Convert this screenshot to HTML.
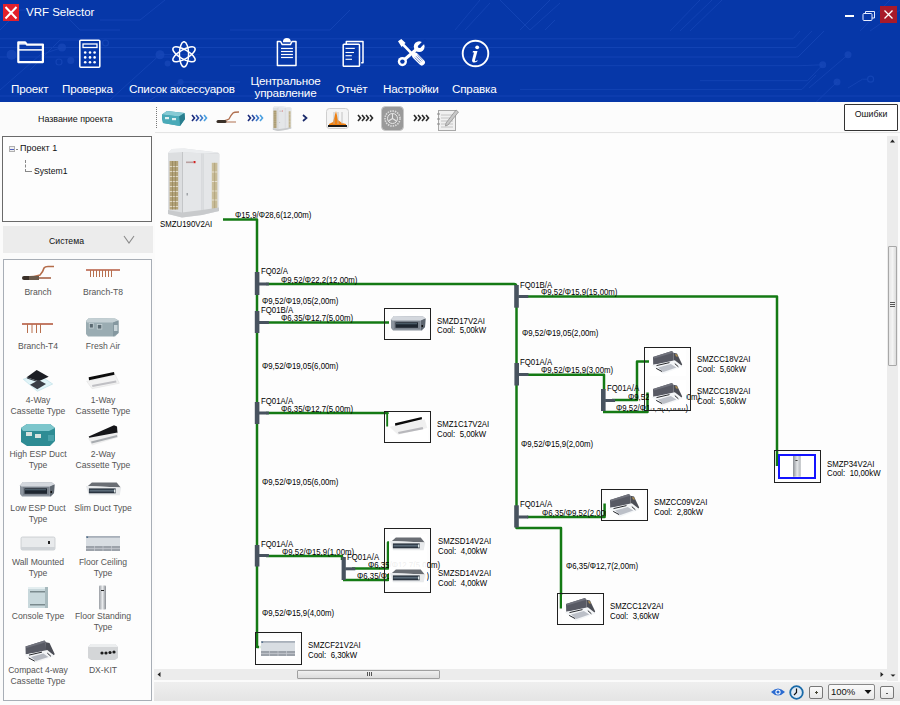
<!DOCTYPE html>
<html><head><meta charset="utf-8">
<style>
*{margin:0;padding:0;box-sizing:border-box}
html,body{width:900px;height:705px;overflow:hidden;background:#fbfbfb;font-family:"Liberation Sans",sans-serif;position:relative}
.a{position:absolute}
#hdr{left:0;top:0;width:900px;height:102px;background:#0637a8;overflow:hidden}
.ml{color:#fff;font-size:11.7px;letter-spacing:-0.2px;text-align:center;line-height:12px;white-space:nowrap}
.t8{font-size:8.8px;color:#000;white-space:nowrap;line-height:9px;transform:scaleX(0.89);transform-origin:0 0;margin-top:0.9px}
.lp{font-size:8.6px;color:#555;text-align:center;line-height:11px;white-space:nowrap}
.g{background:#167a12}
.j{background:#48535e}
.bx{border:1px solid #222;background:#fff}
</style></head><body>
<div id="hdr" class="a">
<svg class="a" style="left:0;top:0" width="900" height="102">
 <g stroke="#1747b8" stroke-width="1" fill="none" opacity="0.75">
  <path d="M0 38.8 H793 L800 31"/>
  <path d="M0 47.5 H796 L812 31"/>
  <path d="M0 57 H798 L824 31"/>
  <path d="M230 65.7 H800 L822 64.8"/>
  <path d="M700 80.7 H807.6 L822.7 64.8"/>
  <path d="M520 89.4 H802 L816 75"/>
  <path d="M809 88 L848 54.7"/>
  <path d="M816.3 102 L837 82"/>
  <path d="M848 88 L862.5 79.2 H867"/>
  <path d="M0 96 H900"/>
  <path d="M670 31 L700 0 M680 31 L712 0 M690 31 L722 0"/>
  <path d="M860 31 L890 0 M870 31 L900 10"/>
  <path d="M455 30 L480 0 M465 30 L490 3 M520 30 L550 0 M530 30 L560 3 M530 30 L500 0 M545 30 L555 20"/>
  <path d="M0 30 L20 10 H60 L80 30 H120"/>
  <path d="M30 70 L60 40 H100"/>
  <path d="M0 90 L40 55 L62 47.5"/>
  <path d="M110 100 L160 54.7 L200 54.7"/>
  <path d="M150 100 L180 82 H240"/>
  <path d="M100 20 L140 20 L165 0"/>
  <path d="M230 30 H330 L350 10"/>
 </g>
 <g fill="#1747b8" opacity="0.8">
  <circle cx="822.7" cy="64.8" r="3.5"/><circle cx="848" cy="54.7" r="3.5"/><circle cx="837" cy="82" r="3.5"/>
  <circle cx="11.6" cy="54.7" r="5"/><circle cx="62" cy="47.5" r="4"/><circle cx="70.8" cy="60.5" r="3.5"/>
  <circle cx="160" cy="54.7" r="4.5"/><circle cx="167.6" cy="63.4" r="3"/><circle cx="180.6" cy="82" r="3"/>
 </g>
 <g stroke="#1747b8" stroke-width="1.2" fill="none" opacity="0.8"><circle cx="870.6" cy="79.2" r="3"/><circle cx="59" cy="62" r="3"/><circle cx="105.5" cy="43" r="3"/></g>
</svg>
<div class="a" style="left:3px;top:4px;width:16px;height:17px;background:#e2202c"></div>
<svg class="a" style="left:3px;top:4px" width="16" height="17"><path d="M2.5 3 L13.5 14.5 M13.5 3 L2.5 14.5" stroke="#fff" stroke-width="2"/></svg>
<div class="a" style="left:26px;top:5px;font-size:11.5px;color:#fff;line-height:14px">VRF Selector</div>
<div class="a" style="left:845px;top:15px;width:9px;height:1.5px;background:#fff"></div>
<svg class="a" style="left:862px;top:10px" width="14" height="12"><rect x="1" y="3.5" width="9" height="7" rx="1" stroke="#e6ecff" stroke-width="1" fill="none"/><path d="M3.5 3.5 V1.5 H12.5 V8 H10" stroke="#e6ecff" stroke-width="1" fill="none"/></svg>
<div class="a" style="left:880px;top:6px;width:17px;height:17px;background:#a81a2a"></div>
<svg class="a" style="left:880px;top:6px" width="17" height="17"><path d="M4.5 4.5 L12.5 12.5 M12.5 4.5 L4.5 12.5" stroke="#fff" stroke-width="1.3"/></svg>

<!-- folder -->
<svg class="a" style="left:16px;top:40px" width="30" height="25"><path d="M2.3 2.3 H9.2 L10.8 4.6 H26.9 V22.1 H2.3 Z" stroke="#fff" stroke-width="2.2" fill="none" stroke-linejoin="round"/><path d="M2.3 3.2 H9.4 V4.6 H2.3 Z" fill="#fff"/><path d="M2.3 9.9 H26.9" stroke="#fff" stroke-width="1.5"/></svg>
<div class="a ml" style="left:11px;top:83px">Проект</div>
<!-- calculator -->
<svg class="a" style="left:78px;top:39px" width="24" height="30"><rect x="1.8" y="1.3" width="20" height="27" rx="1" stroke="#fff" stroke-width="1.6" fill="none"/><rect x="5" y="5" width="14" height="3.5" stroke="#fff" stroke-width="1.3" fill="none"/>
<g fill="#fff"><circle cx="7.2" cy="13.5" r="1.3"/><circle cx="12" cy="13.5" r="1.3"/><circle cx="16.6" cy="13.5" r="1.3"/><circle cx="7.2" cy="18.4" r="1.3"/><circle cx="12" cy="18.4" r="1.3"/><circle cx="16.6" cy="18.4" r="1.3"/><circle cx="7.2" cy="23.3" r="1.3"/><circle cx="12" cy="23.3" r="1.3"/><circle cx="16.6" cy="23.3" r="1.3"/></g></svg>
<div class="a ml" style="left:62px;top:83px">Проверка</div>
<!-- atom -->
<svg class="a" style="left:171px;top:41px" width="26" height="27"><g stroke="#fff" stroke-width="1.5" fill="none"><ellipse cx="13" cy="13.3" rx="12.6" ry="4.6" transform="rotate(90 13 13.3)"/><ellipse cx="13" cy="13.3" rx="12.6" ry="4.6" transform="rotate(30 13 13.3)"/><ellipse cx="13" cy="13.3" rx="12.6" ry="4.6" transform="rotate(150 13 13.3)"/></g></svg>
<div class="a ml" style="left:129px;top:83px">Список аксессуаров</div>
<!-- clipboard -->
<svg class="a" style="left:270px;top:34px" width="34" height="36"><path d="M7.4 7.5 H10.6 L12.2 10.6 H20.4 L22 7.5 H26 V31.6 H7.4 Z" stroke="#fff" stroke-width="1.5" fill="none" stroke-linejoin="round"/><path d="M12.9 8.3 Q13 4.1 16.9 4.1 Q20.8 4.1 20.9 8.3 Z" fill="#fff"/><g stroke="#fff" stroke-width="1.2"><path d="M11 14.5 H22.9"/><path d="M11 17.5 H22.9"/><path d="M11 20.5 H22.9"/><path d="M11 23.5 H22.9"/></g></svg>
<div class="a ml" style="left:250px;top:75px;width:71px">Центральное<br>управление</div>
<!-- report -->
<svg class="a" style="left:335px;top:34px" width="34" height="36"><path d="M11.3 10 V7.4 H28 V28.8 H26.2" stroke="#fff" stroke-width="1.5" fill="none" stroke-linejoin="round"/><rect x="8.2" y="10.3" width="16.3" height="22" rx="0.8" stroke="#fff" stroke-width="1.5" fill="none"/><g stroke="#fff" stroke-width="1.1"><path d="M10.5 14.4 H19.8"/><path d="M10.5 18.5 H19"/><path d="M10.5 21.7 H16.8"/><path d="M10.5 25.3 H17"/></g></svg>
<div class="a ml" style="left:336px;top:83px">Отчёт</div>
<!-- tools -->
<svg class="a" style="left:392px;top:34px" width="40" height="38">
<g fill="#fff">
<path d="M6 7.2 L9.3 5 L13.6 9 L12.4 10.1 L21.5 19.4 L19.6 21.2 L10.6 12 L9.6 12.9 Z"/>
<circle cx="10.4" cy="27.6" r="4.6"/>
<circle cx="27.2" cy="12.6" r="5.4"/>
</g>
<path d="M12 26 L26 14" stroke="#fff" stroke-width="3"/>
<path d="M23.2 21.8 L29.8 28.4" stroke="#fff" stroke-width="6.2" stroke-linecap="round"/>
<path d="M19.8 20.8 L22.6 18" stroke="#fff" stroke-width="3"/>
<circle cx="10.4" cy="27.6" r="2.2" fill="#0637a8"/>
<path d="M26.4 11.4 L28.6 13.6 L35 7.2 L32.8 5 Z" fill="#0637a8"/>
<circle cx="27.5" cy="12.5" r="1.6" fill="#0637a8"/>
<g stroke="#0637a8" stroke-width="0.6"><path d="M22.8 23.6 L28 28.8"/><path d="M24.1 22.3 L29.3 27.5"/><path d="M25.4 21 L30.6 26.2"/></g>
</svg>
<div class="a ml" style="left:383px;top:83px">Настройки</div>
<!-- info -->
<svg class="a" style="left:461px;top:39px" width="29" height="29"><circle cx="14.5" cy="14.5" r="12.8" stroke="#fff" stroke-width="1.9" fill="none"/><circle cx="16.2" cy="8.3" r="1.9" fill="#fff"/><path d="M12 12 H16.5 L14 21 Q13.5 22.5 15 22 L16.6 21 L16.2 22.5 Q13.5 24 11.8 23.2 Q10.6 22.3 11.2 20.6 L13 13.5 L11.6 13.4 Z" fill="#fff"/></svg>
<div class="a ml" style="left:452px;top:83px">Справка</div>
</div>

<!-- left panel -->
<div class="a" style="left:0;top:102px;width:155px;height:603px;background:#fbfbfb"></div>
<div class="a" style="left:38px;top:114px;font-size:8.9px;color:#111;line-height:11px">Название проекта</div>
<div class="a" style="left:2px;top:136px;width:150px;height:86px;border:1px solid #6a6a6a;background:#fdfdfd"></div>
<div class="a" style="left:9px;top:146px;width:6px;height:6px;border:1px solid #b0b0b0;background:#eee"></div>
<div class="a" style="left:10px;top:148.5px;width:4px;height:1px;background:#5060c0"></div>
<div class="a" style="left:16px;top:149px;width:2px;height:1px;background:#888"></div>
<div class="a" style="left:20px;top:143px;font-size:9px;color:#111;line-height:11px">Проект 1</div>
<div class="a" style="left:25px;top:160px;width:1px;height:12px;border-left:1px dashed #888"></div>
<div class="a" style="left:26px;top:171px;width:6px;height:1px;border-top:1px dashed #888"></div>
<div class="a" style="left:34px;top:166px;font-size:8.6px;color:#111;line-height:11px">System1</div>
<div class="a" style="left:3px;top:226px;width:150px;height:27px;background:#ececec"></div>
<div class="a" style="left:49px;top:236px;font-size:8.7px;color:#111;line-height:11px">Система</div>
<svg class="a" style="left:123px;top:235px" width="12" height="9"><path d="M1 1 L6 8 L11 1" stroke="#8a8a8a" stroke-width="1.1" fill="none"/></svg>
<div class="a" style="left:3px;top:259px;width:149px;height:442px;border:1px solid #a8aeb6;background:#fdfdfd"></div>

<!-- items -->
<div class="a lp" style="left:3px;top:287px;width:70px">Branch</div>
<div class="a lp" style="left:68px;top:287px;width:70px">Branch-T8</div>
<div class="a lp" style="left:3px;top:341px;width:70px">Branch-T4</div>
<div class="a lp" style="left:68px;top:341px;width:70px">Fresh Air</div>
<div class="a lp" style="left:3px;top:395px;width:70px">4-Way<br>Cassette Type</div>
<div class="a lp" style="left:68px;top:395px;width:70px">1-Way<br>Cassette Type</div>
<div class="a lp" style="left:3px;top:449px;width:70px">High ESP Duct<br>Type</div>
<div class="a lp" style="left:68px;top:449px;width:70px">2-Way<br>Cassette Type</div>
<div class="a lp" style="left:3px;top:503px;width:70px">Low ESP Duct<br>Type</div>
<div class="a lp" style="left:68px;top:503px;width:70px">Slim Duct Type</div>
<div class="a lp" style="left:3px;top:557px;width:70px">Wall Mounted<br>Type</div>
<div class="a lp" style="left:68px;top:557px;width:70px">Floor Ceiling<br>Type</div>
<div class="a lp" style="left:3px;top:611px;width:70px">Console Type</div>
<div class="a lp" style="left:68px;top:611px;width:70px">Floor Standing<br>Type</div>
<div class="a lp" style="left:3px;top:665px;width:70px">Compact 4-way<br>Cassette Type</div>
<div class="a lp" style="left:68px;top:665px;width:70px">DX-KIT</div>

<!-- symbol defs -->
<svg width="0" height="0" style="position:absolute">
<defs>
 <linearGradient id="gDuct" x1="0" y1="0" x2="0" y2="1"><stop offset="0" stop-color="#c8ccd2"/><stop offset="1" stop-color="#7e858e"/></linearGradient>
 <linearGradient id="gSteel" x1="0" y1="0" x2="1" y2="0"><stop offset="0" stop-color="#9a9ea4"/><stop offset="0.5" stop-color="#e8eaec"/><stop offset="1" stop-color="#8a8e94"/></linearGradient>
</defs></svg>
<!-- item icons -->
<svg class="a" style="left:21px;top:265px" width="34" height="17"><path d="M6 13 H30" stroke="#a05a3c" stroke-width="1.5"/><path d="M4 12 Q14 12 19 10 Q22 7 23 3 Q24 1.5 27 1.5 L33 1.5" stroke="#b46c4a" stroke-width="1.6" fill="none"/><rect x="1" y="11" width="17" height="4" rx="2" fill="#3a3028"/><rect x="8" y="11" width="10" height="4" fill="#6a5a4c"/></svg>
<svg class="a" style="left:86px;top:269px" width="35" height="10"><path d="M0 1 H34" stroke="#b45a40" stroke-width="1.6"/><g stroke="#b8704e" stroke-width="1"><path d="M4.5 1 V8 M7.5 1 V8 M10.5 1 V8 M13.5 1 V8 M16.5 1 V8 M19.5 1 V8 M22.5 1 V8 M25.5 1 V8"/></g></svg>
<svg class="a" style="left:22px;top:323px" width="32" height="11"><path d="M0 1 H31" stroke="#b45a40" stroke-width="1.6"/><g stroke="#b8704e" stroke-width="1"><path d="M5.5 1 V10 M10 1 V10 M14.5 1 V10 M18.5 1 V10"/></g></svg>
<svg class="a" style="left:85px;top:317px" width="35" height="21"><path d="M1 4 L4 1 L30 1.5 L33.5 3.5 L33.5 16 L30 19.5 L3 19.5 L1 17 Z" fill="#9aacb2"/><path d="M1 4 L4 1 L30 1.5 L33.5 3.5 L28 5.5 L2 5.5 Z" fill="#c4d0d4"/><path d="M28 5.5 L33.5 3.5 L33.5 16 L28 19.5 Z" fill="#8598a0"/><rect x="4.3" y="6.5" width="4" height="4.5" fill="#5a6a72" stroke="#c8d4d8" stroke-width="0.8"/><rect x="12.3" y="7.5" width="4.5" height="4.5" fill="#5a6a72" stroke="#c8d4d8" stroke-width="0.8"/><rect x="29" y="8" width="3.5" height="6" fill="#c8d4d8"/></svg>
<svg class="a" style="left:20px;top:368px" width="36" height="26"><path d="M3.3 11.2 L18.7 6.7 L32.7 16 L17.3 23.3 Z" fill="#e0f4f8" stroke="#b8dce4" stroke-width="0.6"/><path d="M6.7 9.3 L16.7 2 L28.7 8.7 L18.7 13.3 Z" fill="#1c1e24"/><path d="M6.7 9.3 L18.7 13.3 L18.7 14.5 L7 10.5 Z" fill="#40444c"/><path d="M10 16.7 L18.7 12 L26 16 L17.3 21.3 Z" fill="#3a3e46"/></svg>
<svg class="a" style="left:85px;top:370px" width="36" height="20"><path d="M1.7 11.3 L30.3 4.7 L34.3 13.3 L7 18.7 Z" fill="#f2f2f2" stroke="#dedede" stroke-width="0.5"/><path d="M3.7 7.3 L29 2 L29.5 4.8 L4 10.3 Z" fill="#0c0c0c"/><path d="M7 15 L31 10.5 L31.5 12.5 L7.5 17 Z" fill="#c0c0c4"/></svg>
<svg class="a" style="left:20px;top:423px" width="36" height="24"><path d="M1 5 L7 1 L30 1 L35 5 L35 18 L30 23 L7 23 L1 19 Z" fill="#2e8c94"/><path d="M1 5 L7 1 L30 1 L35 5 L29 8 L3 8 Z" fill="#7cc6cc"/><rect x="6" y="9" width="6" height="4" fill="#d8e4e0"/><rect x="15" y="11" width="6" height="4" fill="#d8e4e0"/><rect x="28" y="12" width="6" height="6" fill="#4aa2aa"/></svg>
<svg class="a" style="left:86px;top:423px" width="34" height="24"><path d="M2.7 13.5 L28 2.3 L31 3.5 L31.5 10 L5 19 Z" fill="#141518"/><path d="M2 15 L31.5 9.5 L32 14.5 L6 22.5 Z" fill="#eeeeee"/><path d="M5 18.5 L31 12 L31.3 14 L5.7 20.5 Z" fill="#a8acb0"/></svg>
<svg class="a" style="left:20px;top:482px" width="36" height="16" overflow="visible"><path d="M0 3.5 L3 0 L32 0.5 L34.5 2.5 L34 11 L31 14.5 L2 14.5 L0 12 Z" fill="#8c949e"/><path d="M0 3.5 L3 0 L32 0.5 L34.5 2.5 L30 4.5 L1.5 4.5 Z" fill="#d4d8de"/><rect x="3" y="5" width="26" height="8" fill="#7a828c"/><rect x="4.5" y="6.3" width="22.5" height="5.5" fill="#1e2630"/><rect x="5" y="7" width="21" height="1.3" fill="#4a5a66"/><path d="M30 4.5 L34.5 2.5 L34 11 L30 14.5 Z" fill="#5e666f"/><rect x="30.5" y="9" width="1.5" height="2" fill="#111"/></svg>
<svg class="a" style="left:85.5px;top:483px" width="36" height="15" overflow="visible"><path d="M1.9 3 L5.9 -0.6 L30.7 -0.6 L34.7 4.4 Z" fill="#6a6e74"/><path d="M-0.1 3 L35.2 4.4 L33.7 12.2 L2.9 12.2 Z" fill="#e8eaec"/><path d="M2.9 5.4 H29.7 V10.3 H2.9 Z" fill="#2a3440"/><path d="M3.5 6.8 H29 V8.6 H3.5 Z" fill="#5a6a78"/><rect x="28" y="6.5" width="1.4" height="3" fill="#e0e8e8"/></svg>
<svg class="a" style="left:20px;top:536px" width="36" height="15"><rect x="1" y="1" width="34" height="13" rx="1.5" fill="#e8eaec" stroke="#c4c8cc" stroke-width="0.8"/><rect x="1" y="11" width="34" height="3" fill="#d0d4d8"/><rect x="28" y="5" width="2" height="3" fill="#222"/></svg>
<svg class="a" style="left:86px;top:536px" width="34" height="16" overflow="visible"><rect x="0" y="0" width="34" height="15" fill="#d8dde2"/><rect x="0" y="0" width="34" height="1.8" fill="#a8b0ba"/><rect x="0.5" y="0.5" width="1.6" height="1.4" fill="#4a6a88"/><rect x="0" y="10" width="34" height="5" fill="#9ca2aa"/><path d="M0 12.5 H34 M8.5 10 V15 M17 10 V15 M25.5 10 V15" stroke="#c8ccd2" stroke-width="0.7"/></svg>
<svg class="a" style="left:27px;top:586px" width="22" height="23"><rect x="1" y="1" width="20" height="21" fill="#c8d8dc"/><rect x="1" y="1" width="20" height="2" fill="#e4eef0"/><rect x="3" y="5" width="16" height="1.5" fill="#7a8a8e"/><rect x="3" y="18" width="16" height="1.5" fill="#7a8a8e"/><rect x="18" y="1" width="3" height="21" fill="#a8babe"/></svg>
<svg class="a" style="left:98px;top:585px" width="9" height="25"><rect x="1" y="0.5" width="7" height="24" rx="1" fill="url(#gSteel)"/><rect x="3" y="5" width="3" height="1" fill="#222"/></svg>
<svg class="a" style="left:24px;top:640px" width="32" height="24" overflow="visible"><g transform="translate(1.5,0.5)"><path d="M0 6 L19 0 L20.3 1.8 L20.6 11 L0.2 13.7 Z" fill="#585a64"/><path d="M0 6 L19 0 L20.3 1.8 L1 7.6 Z" fill="#70727c"/><path d="M20.3 1.8 L24 2.6 L29.2 13.6 L28.4 14.8 L20.6 11 Z" fill="#4c4e56"/><path d="M-1 14.3 L21.8 9.4 L29.2 15.4 L9.9 22.2 Z" fill="#f2f4f6"/><path d="M5.3 16.5 L17.8 13.1 L22.9 16.5 L10.4 20.5 Z" fill="#b4b8c0"/><path d="M3.5 14.6 L16.5 11.6 M21.8 12.6 L25.4 15.8 M3.2 17.4 L9.2 20.6" stroke="#26282c" stroke-width="1"/></g></svg>
<svg class="a" style="left:87px;top:643px" width="32" height="18"><path d="M1 4 L4 1 L28 1 L31 4 L31 15 L28 17 L4 17 L1 15 Z" fill="#d4d6d8"/><path d="M1 4 L4 1 L28 1 L31 4 Z" fill="#eceeef"/><circle cx="15" cy="10" r="1.6" fill="#1c1c1c"/><circle cx="19" cy="10" r="1.6" fill="#1c1c1c"/><circle cx="23" cy="9.5" r="1.6" fill="#1c1c1c"/><circle cx="27" cy="9" r="1.6" fill="#1c1c1c"/></svg>

<!-- toolbar row -->
<div class="a" style="left:155px;top:102px;width:745px;height:31px;background:#fcfcfc;border-bottom:1px solid #e4e4e4"></div>
<div class="a" style="left:156px;top:107px;width:1px;height:21px;border-left:1px dotted #777"></div>
<div class="a" style="left:844px;top:104px;width:54px;height:27px;border:1.5px solid #333;border-radius:1px;background:#fff"></div>
<div class="a" style="left:844px;top:109px;width:54px;text-align:center;font-size:8.8px;color:#111;line-height:11px">Ошибки</div>
<!-- canvas -->
<div class="a" style="left:155px;top:134px;width:733px;height:536px;background:#fdfdfd"></div>
<!-- vertical scrollbar -->
<div class="a" style="left:887px;top:136px;width:11px;height:545px;background:#ececec"></div>
<svg class="a" style="left:887px;top:136px" width="11" height="10"><path d="M3 6.5 L5.5 3.5 L8 6.5 Z" fill="#222"/></svg>
<div class="a" style="left:888px;top:246px;width:9px;height:120px;background:linear-gradient(to right,#e6e6e6,#f4f4f4,#dcdcdc);border:1px solid #a8a8a8;border-radius:1px"></div>
<div class="a" style="left:890px;top:302px;width:5px;height:1px;background:#555;box-shadow:0 2px 0 #555,0 4px 0 #555"></div>
<!-- horizontal scrollbar -->
<div class="a" style="left:154px;top:669px;width:733px;height:11px;background:#ececec"></div>
<svg class="a" style="left:154px;top:669px" width="10" height="11"><path d="M6.5 3 L3.5 5.5 L6.5 8 Z" fill="#222"/></svg>
<svg class="a" style="left:877px;top:669px" width="10" height="11"><path d="M3.5 3 L6.5 5.5 L3.5 8 Z" fill="#222"/></svg>
<svg class="a" style="left:888px;top:670px" width="10" height="11"><path d="M2.5 4.5 L5 6.8 L7.5 4.5 Z" fill="#222"/></svg>
<div class="a" style="left:297px;top:670px;width:143px;height:9px;background:linear-gradient(#f0f0f0,#dcdcdc);border:1px solid #a0a0a0;border-radius:1px"></div>
<div class="a" style="left:367px;top:672px;width:1px;height:4px;background:#555;box-shadow:2px 0 0 #555,4px 0 0 #555"></div>
<!-- bottom bar -->
<div class="a" style="left:154px;top:682px;width:746px;height:19px;background:linear-gradient(#efefef,#e4e4e4)"></div>
<svg class="a" style="left:770px;top:686px" width="16" height="12"><path d="M1 6 Q8 -1 15 6 Q8 13 1 6 Z" fill="#2a6ad0"/><circle cx="8" cy="6" r="2.6" fill="#fff"/><circle cx="8" cy="6" r="1.6" fill="#2a6ad0"/></svg>
<svg class="a" style="left:789px;top:685px" width="15" height="15"><circle cx="7.5" cy="7.5" r="6.3" fill="#dfeaf4" stroke="#1a6aa8" stroke-width="1.8"/><path d="M7.5 3.5 V7.5 L5 10" stroke="#111" stroke-width="1.2" fill="none"/></svg>
<div class="a" style="left:809px;top:686px;width:14px;height:13px;border:1px solid #777;border-radius:2px;background:linear-gradient(#fafafa,#e6e6e6)"></div>
<div class="a" style="left:814.5px;top:692px;width:3px;height:1px;background:#443"></div><div class="a" style="left:815.5px;top:691px;width:1px;height:3px;background:#443"></div>
<div class="a" style="left:828px;top:684px;width:47px;height:16px;border:1px solid #888;border-radius:2px;background:linear-gradient(#fafafa,#e8e8e8)"></div>
<div class="a" style="left:831px;top:686px;font-size:9.5px;color:#111;line-height:11px">100%</div>
<svg class="a" style="left:864px;top:689px" width="8" height="6"><path d="M0.5 1 H7.5 L4 5 Z" fill="#111"/></svg>
<div class="a" style="left:880px;top:686px;width:14px;height:13px;border:1px solid #777;border-radius:2px;background:linear-gradient(#fafafa,#e6e6e6)"></div>
<div class="a" style="left:885.5px;top:693px;width:2px;height:1px;background:#555"></div>

<!-- toolbar icons -->
<svg class="a" style="left:161px;top:110px" width="25" height="17"><path d="M1 4.5 L6 1 L23.5 3 L24 9 L19 16 L2 13 L1 9 Z" fill="#3c9cac"/><path d="M1 4.5 L6 1 L23.5 3 L18 6.5 Z" fill="#86cad4"/><path d="M18 6.5 L23.5 3 L24 9 L19 16 Z" fill="#2a7e8e"/><path d="M1 4.5 L18 6.5 L19 16 L2 13 Z" fill="#4aaab8"/><rect x="4" y="7" width="4" height="2.2" fill="#e0f0f0"/><rect x="11" y="8" width="4" height="2.2" fill="#e0f0f0"/></svg>
<svg class="a" style="left:191px;top:114px" width="17" height="8"><g fill="none" stroke-width="1.6"><path d="M1 1 L3.5 4 L1 7" stroke="#1a2a7a"/><path d="M5 1 L7.5 4 L5 7" stroke="#2a4aa0"/><path d="M9 1 L11.5 4 L9 7" stroke="#3a78c8"/><path d="M13 1 L15.5 4 L13 7" stroke="#4aa0e0"/></g></svg>
<svg class="a" style="left:216px;top:111px" width="24" height="13"><path d="M2 10 Q10 10 13 8 Q15 4 17 2 Q18 1 23 1" stroke="#b07050" stroke-width="1.3" fill="none"/><path d="M4 11 H20" stroke="#b07050" stroke-width="1"/><rect x="0.5" y="9" width="10" height="3" rx="1.5" fill="#3a3028"/></svg>
<svg class="a" style="left:247px;top:114px" width="17" height="8"><g fill="none" stroke-width="1.6"><path d="M1 1 L3.5 4 L1 7" stroke="#1a2a7a"/><path d="M5 1 L7.5 4 L5 7" stroke="#2a4aa0"/><path d="M9 1 L11.5 4 L9 7" stroke="#3a78c8"/><path d="M13 1 L15.5 4 L13 7" stroke="#4aa0e0"/></g></svg>
<svg class="a" style="left:272px;top:105px" width="20" height="27"><g transform="translate(-1.3,-0.5) scale(0.36)">
<path d="M6 9 L10 5 L22 4.5 L56 8.5 L57.5 10 L57 67 L40 71 L20 73.6 L6 70 Z" fill="#dcdee0"/>
<path d="M6 9 L10 5 L22 4.5 L56 8.5 L41 9.5 L20.5 8 Z" fill="#eceef0"/>
<path d="M20.5 8 L41 9.5 L57 10 L57 67 L40 69.5 L20.5 72 Z" fill="#e4e6e8"/>
<path d="M20.5 8 V72" stroke="#c4c6c8" stroke-width="1"/>
<path d="M39.8 9.5 V70 M41.2 9.5 V70" stroke="#cdd0d2" stroke-width="0.7"/>
<rect x="7.6" y="17" width="8.6" height="48.5" fill="#b4a47a"/>
<g stroke="#e8e4d6" stroke-width="0.8"><path d="M7.6 22.5 H16.2 M7.6 27.5 H16.2 M7.6 32.5 H16.2 M7.6 37.5 H16.2 M7.6 42.5 H16.2 M7.6 47.5 H16.2 M7.6 52.5 H16.2 M7.6 57.5 H16.2 M7.6 62.5 H16.2"/></g>
<path d="M10.5 17 V65.5 M13.4 17 V65.5" stroke="#8a7a50" stroke-width="0.6"/>
<rect x="49.8" y="18.8" width="5.6" height="46.5" fill="#c8bc98"/>
<g stroke="#eeeae0" stroke-width="0.8"><path d="M49.8 28 H55.4 M49.8 37.5 H55.4 M49.8 47 H55.4 M49.8 56 H55.4"/></g>
<path d="M52.6 18.8 V65.3" stroke="#a09068" stroke-width="0.5"/>
<rect x="24" y="17.5" width="7" height="1.6" fill="#b8a0a0"/><rect x="31.5" y="17" width="2" height="2.2" fill="#d02020"/>
<rect x="24.5" y="49" width="1.5" height="2.5" fill="#a0a4a8"/>
<path d="M6 66 L20 68.5 L40 66 L57 63.5 L57 67 L40 71 L20 73.6 L6 70 Z" fill="#c8cacc"/>
</g></svg>
<svg class="a" style="left:302px;top:114px" width="6" height="8"><path d="M1 1 L4.5 4 L1 7" stroke="#1a2a6a" stroke-width="1.7" fill="none"/></svg>
<svg class="a" style="left:326px;top:108px" width="23" height="21"><rect x="0.5" y="0.5" width="22" height="20" rx="3" fill="#f4f4f4" stroke="#cfcfcf"/><path d="M3 16 L7 14 L10 3 L12 12 L16 15 L20 16 V17 H3 Z" fill="#f08010"/><path d="M8 4 V16 M12 4 V16 M16 4 V16" stroke="#b8b8b8" stroke-width="0.8"/><rect x="2" y="17" width="19" height="2" fill="#1a1a1a"/></svg>
<svg class="a" style="left:357px;top:114px" width="17" height="8"><g fill="none" stroke="#2a2a2a" stroke-width="1.6"><path d="M1 1 L3.5 4 L1 7"/><path d="M5 1 L7.5 4 L5 7"/><path d="M9 1 L11.5 4 L9 7"/><path d="M13 1 L15.5 4 L13 7"/></g></svg>
<svg class="a" style="left:381px;top:106px" width="23" height="25"><rect x="0.5" y="0.5" width="22" height="24" rx="4" fill="#9a9a9a" stroke="#c8c8c8"/><circle cx="11.5" cy="12.5" r="7.5" fill="none" stroke="#dcdcdc" stroke-width="1.6" stroke-dasharray="1.5 1"/><circle cx="11.5" cy="12.5" r="5" fill="none" stroke="#e8e8e8" stroke-width="1"/><path d="M11.5 12.5 V7.5 M11.5 12.5 L7.5 15 M11.5 12.5 L15.5 15" stroke="#e8e8e8" stroke-width="1.1"/></svg>
<svg class="a" style="left:413px;top:114px" width="17" height="8"><g fill="none" stroke="#2a2a2a" stroke-width="1.6"><path d="M1 1 L3.5 4 L1 7"/><path d="M5 1 L7.5 4 L5 7"/><path d="M9 1 L11.5 4 L9 7"/><path d="M13 1 L15.5 4 L13 7"/></g></svg>
<svg class="a" style="left:436px;top:107px" width="23" height="24"><rect x="2.5" y="3.5" width="17" height="20" fill="#f0f0f0" stroke="#a8a8a8"/><g stroke="#b8b8b8" stroke-width="0.8"><path d="M5 8 H17 M5 11 H17 M5 14 H17 M5 17 H17 M5 20 H17"/></g><g fill="none" stroke="#888" stroke-width="1.2"><path d="M1 7 H4 M1 12 H4 M1 17 H4"/></g><path d="M10 16 L20 3 L22.5 5 L12 18 L9.5 19 Z" fill="#c8c8c8" stroke="#888" stroke-width="0.7"/></svg>
<!--DIAG-->
<svg class="a" style="left:0;top:0" width="900" height="705">
<g fill="none" stroke="#147a14" stroke-width="2.5" stroke-linejoin="round">
<path d="M223 219.5 H257 V647 H261"/>
<path d="M266 284 H514 Q516.5 284 516.5 287"/>
<path d="M527 296.5 H777 V466"/>
<path d="M266 322.5 H389"/>
<path d="M266 413 H387.5 V426.5"/>
<path d="M266 556 H342 V560"/>
<path d="M352 568.5 H388 V542.6 H390"/>
<path d="M343 580 H388 V574"/>
<path d="M516.5 300 V528 H561 V608.5"/>
<path d="M527 374.8 H604 V390"/>
<path d="M612 400 H637 V361.4 H649"/>
<path d="M603 412 H647.5 V392.6"/>
<path d="M527 517 H604.6 V503.6"/>
</g><g fill="#48535f">
<rect x="254.8" y="272" width="4.6" height="23"/>
<rect x="258.90000000000003" y="282.5" width="10" height="3"/>
<rect x="254.8" y="311" width="4.6" height="22"/>
<rect x="258.90000000000003" y="321" width="10" height="3"/>
<rect x="254.8" y="402" width="4.6" height="22"/>
<rect x="258.90000000000003" y="411.5" width="10" height="3"/>
<rect x="254.8" y="545" width="4.6" height="21.5"/>
<rect x="258.90000000000003" y="554" width="10" height="3"/>
<rect x="341.6" y="557" width="4.2" height="23"/>
<rect x="345.3" y="567.3" width="10" height="3"/>
<rect x="514.2" y="285" width="4.6" height="22.7"/>
<rect x="518.3000000000001" y="295" width="10" height="3"/>
<rect x="514.4" y="363" width="4.6" height="22.5"/>
<rect x="518.5" y="373" width="10" height="3"/>
<rect x="601" y="389" width="4.6" height="22"/>
<rect x="605.1" y="399" width="10" height="3"/>
<rect x="514.2" y="505.3" width="4.6" height="22.2"/>
<rect x="518.3000000000001" y="515.5" width="10" height="3"/>
</g></svg>
<div class="a t8" style="left:160px;top:219px">SMZU190V2AI</div>
<div class="a t8" style="left:235px;top:210px">Φ15,9/Φ28,6(12,00m)</div>
<div class="a t8" style="left:261px;top:266.5px">FQ02/A</div>
<div class="a t8" style="left:281px;top:275px">Φ9,52/Φ22,2(12,00m)</div>
<div class="a t8" style="left:262px;top:296.6px">Φ9,52/Φ19,05(2,00m)</div>
<div class="a t8" style="left:261px;top:305px">FQ01B/A</div>
<div class="a t8" style="left:281px;top:313.5px">Φ6,35/Φ12,7(5,00m)</div>
<div class="a t8" style="left:262px;top:361px">Φ9,52/Φ19,05(6,00m)</div>
<div class="a t8" style="left:261px;top:396.5px">FQ01A/A</div>
<div class="a t8" style="left:281px;top:404.5px">Φ6,35/Φ12,7(5,00m)</div>
<div class="a t8" style="left:262px;top:477.5px">Φ9,52/Φ19,05(6,00m)</div>
<div class="a t8" style="left:261px;top:539px">FQ01A/A</div>
<div class="a t8" style="left:282px;top:547px">Φ9,52/Φ15,9(1,00m)</div>
<div class="a t8" style="left:347px;top:552px">FQ01A/A</div>
<div class="a t8" style="left:368px;top:560px">Φ6,35/Φ12,7(5,00m)</div>
<div class="a t8" style="left:356.5px;top:571px">Φ6,35/Φ12,7(5,00m)</div>
<div class="a t8" style="left:262px;top:607.7px">Φ9,52/Φ15,9(4,00m)</div>
<div class="a t8" style="left:520px;top:280px">FQ01B/A</div>
<div class="a t8" style="left:541px;top:287.3px">Φ9,52/Φ15,9(15,00m)</div>
<div class="a t8" style="left:522px;top:328.3px">Φ9,52/Φ19,05(2,00m)</div>
<div class="a t8" style="left:520px;top:356.8px">FQ01A/A</div>
<div class="a t8" style="left:541px;top:364.8px">Φ9,52/Φ15,9(3,00m)</div>
<div class="a t8" style="left:607px;top:383px">FQ01A/A</div>
<div class="a t8" style="left:627.5px;top:392px">Φ9,52/Φ15,9(3,00m)</div>
<div class="a t8" style="left:615.5px;top:403.5px">Φ9,52/Φ15,9(3,00m)</div>
<div class="a t8" style="left:521px;top:438.8px">Φ9,52/Φ15,9(2,00m)</div>
<div class="a t8" style="left:520px;top:499.5px">FQ01A/A</div>
<div class="a t8" style="left:541.5px;top:508px">Φ6,35/Φ9,52(2,00m)</div>
<div class="a t8" style="left:565.5px;top:561.2px">Φ6,35/Φ12,7(2,00m)</div>
<div class="a t8" style="left:437px;top:315.7px;line-height:9.7px">SMZD17V2AI<br>Cool:&nbsp; 5,00kW</div>
<div class="a t8" style="left:437px;top:419.2px;line-height:9.7px">SMZ1C17V2AI<br>Cool:&nbsp; 5,00kW</div>
<div class="a t8" style="left:438px;top:536.2px;line-height:9.7px">SMZSD14V2AI<br>Cool:&nbsp; 4,00kW</div>
<div class="a t8" style="left:438px;top:568.2px;line-height:9.7px">SMZSD14V2AI<br>Cool:&nbsp; 4,00kW</div>
<div class="a t8" style="left:308px;top:640.2px;line-height:9.7px">SMZCF21V2AI<br>Cool:&nbsp; 6,30kW</div>
<div class="a t8" style="left:697px;top:354.2px;line-height:9.7px">SMZCC18V2AI<br>Cool:&nbsp; 5,60kW</div>
<div class="a t8" style="left:697px;top:386.2px;line-height:9.7px">SMZCC18V2AI<br>Cool:&nbsp; 5,60kW</div>
<div class="a t8" style="left:826.5px;top:458.7px;line-height:9.7px">SMZP34V2AI<br>Cool:&nbsp; 10,00kW</div>
<div class="a t8" style="left:653.8px;top:497.2px;line-height:9.7px">SMZCC09V2AI<br>Cool:&nbsp; 2,80kW</div>
<div class="a t8" style="left:610px;top:601.2px;line-height:9.7px">SMZCC12V2AI<br>Cool:&nbsp; 3,60kW</div>
<div class="a" style="left:384px;top:308px;width:47px;height:32px;border:1px solid #202020"></div>
<div class="a" style="left:384px;top:411px;width:47px;height:32px;border:1px solid #202020"></div>
<div class="a" style="left:384px;top:528px;width:47px;height:64.5px;border:1px solid #202020"></div>
<div class="a" style="left:254.5px;top:632px;width:47px;height:33px;border:1px solid #202020"></div>
<div class="a" style="left:644px;top:347px;width:47px;height:64px;border:1px solid #202020"></div>
<div class="a" style="left:774.3px;top:450.3px;width:46.4px;height:32.3px;border:1px solid #202020"></div>
<div class="a" style="left:601px;top:489px;width:46.5px;height:32px;border:1px solid #202020"></div>
<div class="a" style="left:557px;top:593px;width:47px;height:32px;border:1px solid #202020"></div>
<svg class="a" style="left:390.7px;top:316px" width="60" height="40" overflow="visible"><g><rect x="-2" y="-4" width="38" height="24" fill="rgba(255,255,255,0.85)"/><path d="M0 3.5 L3 0 L32 0.5 L34.5 2.5 L34 11 L31 14.5 L2 14.5 L0 12 Z" fill="#8c949e"/><path d="M0 3.5 L3 0 L32 0.5 L34.5 2.5 L30 4.5 L1.5 4.5 Z" fill="#d4d8de"/><rect x="3" y="5" width="26" height="8" fill="#7a828c"/><rect x="4.5" y="6.3" width="22.5" height="5.5" fill="#1e2630"/><rect x="5" y="7" width="21" height="1.3" fill="#4a5a66"/><path d="M30 4.5 L34.5 2.5 L34 11 L30 14.5 Z" fill="#5e666f"/><rect x="30.5" y="9" width="1.5" height="2" fill="#111"/></g></svg>
<svg class="a" style="left:389.5px;top:414px" width="60" height="40" overflow="visible"><g><rect x="-2" y="0" width="40" height="26" fill="rgba(255,255,255,0.85)"/><path d="M-0.5 12.7 L34.7 5.3 L37.3 14 L8 20.7 Z" fill="#f0f0f0"/><path d="M5 9.3 L31.7 3 L32 5.3 L5.3 11.7 Z" fill="#0a0a0a"/><path d="M8 18 L32.7 13 L33.3 15.3 L8.7 20 Z" fill="#b8b8bc"/></g></svg>
<svg class="a" style="left:390px;top:537.5px" width="60" height="40" overflow="visible"><g><rect x="-1" y="-4" width="38" height="36" fill="rgba(255,255,255,0.93)"/><path d="M1.9 3 L5.9 -0.6 L30.7 -0.6 L34.7 4.4 Z" fill="#6a6e74"/><path d="M-0.1 3 L35.2 4.4 L33.7 12.2 L2.9 12.2 Z" fill="#e8eaec"/><path d="M2.9 5.4 H29.7 V10.3 H2.9 Z" fill="#2a3440"/><path d="M3.5 6.8 H29 V8.6 H3.5 Z" fill="#5a6a78"/><rect x="28" y="6.5" width="1.4" height="3" fill="#e0e8e8"/></g></svg>
<svg class="a" style="left:390px;top:569.5px" width="60" height="40" overflow="visible"><g><rect x="-1" y="-3" width="38" height="20" fill="rgba(255,255,255,0.97)"/><path d="M1.9 3 L5.9 -0.6 L30.7 -0.6 L34.7 4.4 Z" fill="#6a6e74"/><path d="M-0.1 3 L35.2 4.4 L33.7 12.2 L2.9 12.2 Z" fill="#e8eaec"/><path d="M2.9 5.4 H29.7 V10.3 H2.9 Z" fill="#2a3440"/><path d="M3.5 6.8 H29 V8.6 H3.5 Z" fill="#5a6a78"/><rect x="28" y="6.5" width="1.4" height="3" fill="#e0e8e8"/></g></svg>
<svg class="a" style="left:260.7px;top:641px" width="60" height="40" overflow="visible"><g><rect x="-2" y="-4" width="38" height="22" fill="rgba(255,255,255,0.85)"/><rect x="0" y="0" width="34" height="15" fill="#d8dde2"/><rect x="0" y="0" width="34" height="1.8" fill="#a8b0ba"/><rect x="0.5" y="0.5" width="1.6" height="1.4" fill="#4a6a88"/><rect x="0" y="10" width="34" height="5" fill="#9ca2aa"/><path d="M0 12.5 H34 M8.5 10 V15 M17 10 V15 M25.5 10 V15" stroke="#c8ccd2" stroke-width="0.7"/></g></svg>
<svg class="a" style="left:653px;top:351px" width="60" height="40" overflow="visible"><g><rect x="-4" y="-3" width="37" height="28" fill="#fff"/><path d="M0 6 L19 0 L20.3 1.8 L20.6 11 L0.2 13.7 Z" fill="#585a64"/><path d="M0 6 L19 0 L20.3 1.8 L1 7.6 Z" fill="#70727c"/><path d="M20.3 1.8 L24 2.6 L29.2 13.6 L28.4 14.8 L20.6 11 Z" fill="#4c4e56"/><path d="M22 3 L24 3.4 L25 5.5 L23 5.5 Z" fill="#b09050"/><path d="M-1.5 14.3 L21.8 9.2 L29.8 15.6 L10 23 Z" fill="#f4f6f8"/><path d="M5 16.6 L17.8 13 L23.4 16.6 L10.4 21 Z" fill="#bcc0c8"/><path d="M3.5 14.6 L16.5 11.6 M21.8 12.6 L25.4 15.8 M3.2 17.4 L9.2 20.6" stroke="#26282c" stroke-width="1"/></g></svg>
<svg class="a" style="left:653px;top:383.2px" width="60" height="40" overflow="visible"><g><rect x="-4" y="-3" width="37" height="28" fill="#fff"/><path d="M0 6 L19 0 L20.3 1.8 L20.6 11 L0.2 13.7 Z" fill="#585a64"/><path d="M0 6 L19 0 L20.3 1.8 L1 7.6 Z" fill="#70727c"/><path d="M20.3 1.8 L24 2.6 L29.2 13.6 L28.4 14.8 L20.6 11 Z" fill="#4c4e56"/><path d="M22 3 L24 3.4 L25 5.5 L23 5.5 Z" fill="#b09050"/><path d="M-1.5 14.3 L21.8 9.2 L29.8 15.6 L10 23 Z" fill="#f4f6f8"/><path d="M5 16.6 L17.8 13 L23.4 16.6 L10.4 21 Z" fill="#bcc0c8"/><path d="M3.5 14.6 L16.5 11.6 M21.8 12.6 L25.4 15.8 M3.2 17.4 L9.2 20.6" stroke="#26282c" stroke-width="1"/></g></svg>
<svg class="a" style="left:610px;top:494px" width="60" height="40" overflow="visible"><g><rect x="-4" y="-3" width="37" height="28" fill="#fff"/><path d="M0 6 L19 0 L20.3 1.8 L20.6 11 L0.2 13.7 Z" fill="#585a64"/><path d="M0 6 L19 0 L20.3 1.8 L1 7.6 Z" fill="#70727c"/><path d="M20.3 1.8 L24 2.6 L29.2 13.6 L28.4 14.8 L20.6 11 Z" fill="#4c4e56"/><path d="M22 3 L24 3.4 L25 5.5 L23 5.5 Z" fill="#b09050"/><path d="M-1.5 14.3 L21.8 9.2 L29.8 15.6 L10 23 Z" fill="#f4f6f8"/><path d="M5 16.6 L17.8 13 L23.4 16.6 L10.4 21 Z" fill="#bcc0c8"/><path d="M3.5 14.6 L16.5 11.6 M21.8 12.6 L25.4 15.8 M3.2 17.4 L9.2 20.6" stroke="#26282c" stroke-width="1"/></g></svg>
<svg class="a" style="left:566.3px;top:598px" width="60" height="40" overflow="visible"><g><rect x="-4" y="-3" width="37" height="28" fill="#fff"/><path d="M0 6 L19 0 L20.3 1.8 L20.6 11 L0.2 13.7 Z" fill="#585a64"/><path d="M0 6 L19 0 L20.3 1.8 L1 7.6 Z" fill="#70727c"/><path d="M20.3 1.8 L24 2.6 L29.2 13.6 L28.4 14.8 L20.6 11 Z" fill="#4c4e56"/><path d="M22 3 L24 3.4 L25 5.5 L23 5.5 Z" fill="#b09050"/><path d="M-1.5 14.3 L21.8 9.2 L29.8 15.6 L10 23 Z" fill="#f4f6f8"/><path d="M5 16.6 L17.8 13 L23.4 16.6 L10.4 21 Z" fill="#bcc0c8"/><path d="M3.5 14.6 L16.5 11.6 M21.8 12.6 L25.4 15.8 M3.2 17.4 L9.2 20.6" stroke="#26282c" stroke-width="1"/></g></svg>
<div class="a" style="left:778px;top:454px;width:38px;height:25px;border:2px solid #1414ff;background:#fff"></div>
<svg class="a" style="left:793px;top:456px" width="8" height="21"><defs><linearGradient id="gSt2" x1="0" y1="0" x2="1" y2="0"><stop offset="0" stop-color="#8c9096"/><stop offset="0.55" stop-color="#e4e6e8"/><stop offset="1" stop-color="#b0b4b8"/></linearGradient></defs><rect x="0" y="0" width="7.7" height="20.7" fill="url(#gSt2)"/><rect x="2.4" y="4" width="2.2" height="0.9" fill="#333"/></svg>
<svg class="a" style="left:162px;top:144px" width="64" height="78">
<path d="M6 9 L10 5 L22 4.5 L56 8.5 L57.5 10 L57 67 L40 71 L20 73.6 L6 70 Z" fill="#dcdee0"/>
<path d="M6 9 L10 5 L22 4.5 L56 8.5 L41 9.5 L20.5 8 Z" fill="#eceef0"/>
<path d="M20.5 8 L41 9.5 L57 10 L57 67 L40 69.5 L20.5 72 Z" fill="#e4e6e8"/>
<path d="M20.5 8 V72" stroke="#c4c6c8" stroke-width="1"/>
<path d="M39.8 9.5 V70 M41.2 9.5 V70" stroke="#cdd0d2" stroke-width="0.7"/>
<rect x="7.6" y="17" width="8.6" height="48.5" fill="#b4a47a"/>
<g stroke="#e8e4d6" stroke-width="0.8"><path d="M7.6 22.5 H16.2 M7.6 27.5 H16.2 M7.6 32.5 H16.2 M7.6 37.5 H16.2 M7.6 42.5 H16.2 M7.6 47.5 H16.2 M7.6 52.5 H16.2 M7.6 57.5 H16.2 M7.6 62.5 H16.2"/></g>
<path d="M10.5 17 V65.5 M13.4 17 V65.5" stroke="#8a7a50" stroke-width="0.6"/>
<rect x="49.8" y="18.8" width="5.6" height="46.5" fill="#c8bc98"/>
<g stroke="#eeeae0" stroke-width="0.8"><path d="M49.8 28 H55.4 M49.8 37.5 H55.4 M49.8 47 H55.4 M49.8 56 H55.4"/></g>
<path d="M52.6 18.8 V65.3" stroke="#a09068" stroke-width="0.5"/>
<rect x="24" y="17.5" width="7" height="1.6" fill="#b8a0a0"/><rect x="31.5" y="17" width="2" height="2.2" fill="#d02020"/>
<rect x="24.5" y="49" width="1.5" height="2.5" fill="#a0a4a8"/>
<path d="M6 66 L20 68.5 L40 66 L57 63.5 L57 67 L40 71 L20 73.6 L6 70 Z" fill="#c8cacc"/>
</svg>
<!--/DIAG-->
</body></html>
